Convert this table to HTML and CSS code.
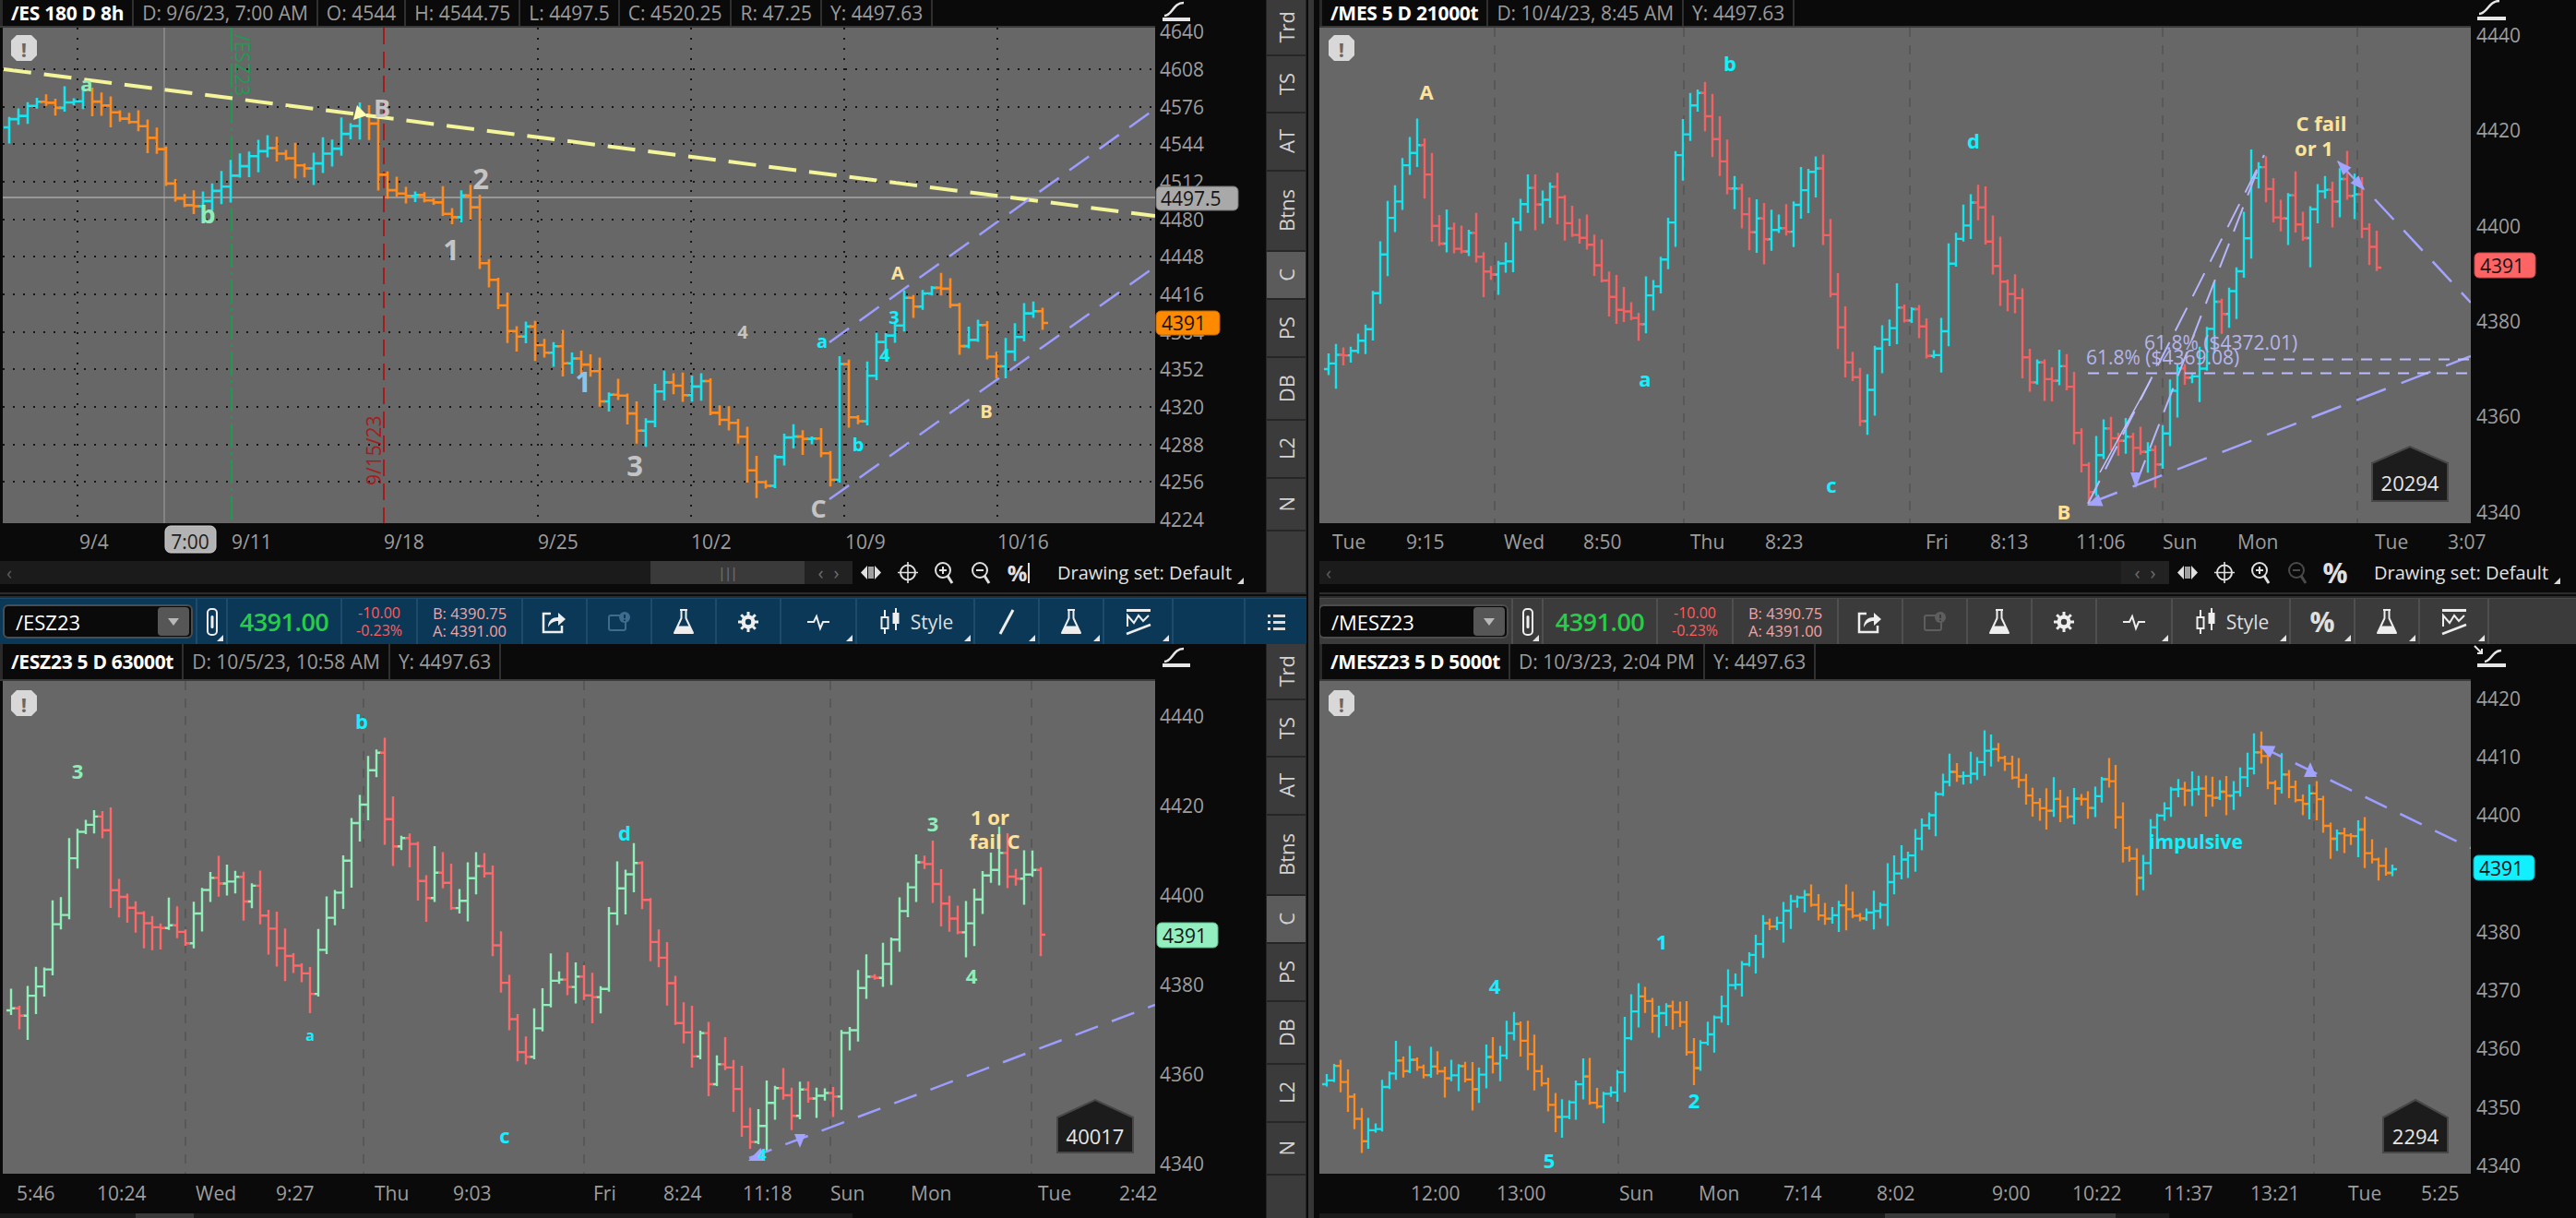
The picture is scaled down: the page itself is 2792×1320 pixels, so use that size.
FILE: index.html
```html
<!DOCTYPE html>
<html lang="en">
<head>
<meta charset="utf-8">
<title>Charts</title>
<link rel="stylesheet" href="styles.css">
</head>
<body>
<div class="app">
  <!-- LEFT COLUMN -->
  <div class="col">
    <div class="pane">
      <section class="panel pl p-top">
        <div class="hdr">
          <span class="cell sym">/ES 180 D 8h</span>
          <span class="cell">D: 9/6/23, 7:00 AM</span>
          <span class="cell">O: 4544</span>
          <span class="cell">H: 4544.75</span>
          <span class="cell">L: 4497.5</span>
          <span class="cell">C: 4520.25</span>
          <span class="cell">R: 47.25</span>
          <span class="cell">Y: 4497.63</span>
        </div>
        <div class="hgap"></div>
        <svg class="axis" width="120" height="606" viewBox="1252 0 120 606">
          <rect x="1252" y="0" width="120" height="606" fill="#0a0a0a"/>
          <path d="M1262 17C1271 17 1271 3 1283 3" fill="none" stroke="#e6e6e6" stroke-width="2.5"/>
          <rect x="1260" y="19" width="30" height="4" fill="#e6e6e6"/>
          <g class="ax">
            <text x="1257" y="34">4640</text><text x="1257" y="75">4608</text><text x="1257" y="116">4576</text>
            <text x="1257" y="156">4544</text><text x="1257" y="197">4512</text><text x="1257" y="238">4480</text>
            <text x="1257" y="278">4448</text><text x="1257" y="319">4416</text><text x="1257" y="360">4384</text>
            <text x="1257" y="400">4352</text><text x="1257" y="441">4320</text><text x="1257" y="482">4288</text>
            <text x="1257" y="522">4256</text><text x="1257" y="563">4224</text>
          </g>
          <rect x="1253" y="202" width="89" height="26" rx="5" fill="#a9a9a9" stroke="#707070"/>
          <text class="bdg" x="1258" y="215">4497.5</text>
          <rect x="1253" y="337" width="69" height="26" rx="5" fill="#ff8a00" stroke="#b86400"/>
          <text class="bdg" x="1259" y="350">4391</text>
        </svg>
        <svg class="chart" width="1252" height="537" viewBox="0 30 1252 537">
          <rect x="3" y="30" width="1249" height="537" fill="#676767"/>
          <g stroke="#151515" stroke-width="2" stroke-dasharray="2 9" fill="none">
            <path d="M3 75H1252M3 116H1252M3 156H1252M3 197H1252M3 238H1252M3 278H1252M3 319H1252M3 360H1252M3 400H1252M3 441H1252M3 482H1252M3 522H1252"/>
            <path d="M84 30V567M583 30V567M749 30V567M915 30V567M1081 30V567"/>
          </g>
          <path d="M178 30V567" stroke="#a2a2a2" stroke-width="1"/>
          <path d="M3 214H1252" stroke="#a8a8a8" stroke-width="1.5"/>
          <path d="M251 30V567" stroke="#1f9a52" stroke-width="2" stroke-dasharray="26 5 3 5"/>
          <text class="vt gn" transform="translate(255 37) rotate(90)">/ESZ23</text>
          <path d="M416 30V567" stroke="#a61c1c" stroke-width="2" stroke-dasharray="18 8"/>
          <text class="vt rd" transform="translate(413 526) rotate(-90)">9/15/23</text>
          <g id="b1"></g>
          <path d="M4 75L1252 234" stroke="#f4f49a" stroke-width="4" stroke-dasharray="30 14" fill="none"/>
          <path d="M899 371L1252 118M899 541L1252 289" stroke="#9d9dff" stroke-width="2.5" stroke-dasharray="26 14" fill="none"/>
          <polygon points="383,130 387,114 398,125" fill="#ffffb4"/>
          <g class="lb">
            <text class="mi" x="94" y="90">a</text>
            <text class="mi big" x="225" y="231">b</text>
            <text class="gr big" x="414" y="116">B</text>
            <text class="gr huge" x="521" y="193">2</text>
            <text class="gr huge" x="489" y="270">1</text>
            <text class="bl huge" x="632" y="413">1</text>
            <text class="gr huge" x="688" y="504">3</text>
            <text class="gr sm" x="805" y="359">4</text>
            <text class="gr big" x="887" y="550">C</text>
            <text class="cy sm" x="891" y="369">a</text>
            <text class="cy sm" x="930" y="481">b</text>
            <text class="cy sm" x="969" y="343">3</text>
            <text class="cy sm" x="959" y="384">4</text>
            <text class="ye sm" x="973" y="295">A</text>
            <text class="ye sm" x="1069" y="445">B</text>
          </g>
          <g transform="translate(26 52)">
            <polygon points="-8,-14 8,-14 14,-8 14,8 8,14 -8,14 -14,8 -14,-8" fill="#d8d8d8"/>
            <text class="bang" x="0" y="1">!</text>
          </g>
        </svg>
        <svg class="times" width="1252" height="39" viewBox="0 567 1252 39">
          <g class="tl">
            <text x="86" y="595">9/4</text><text x="251" y="595">9/11</text><text x="416" y="595">9/18</text>
            <text x="583" y="595">9/25</text><text x="749" y="595">10/2</text><text x="916" y="595">10/9</text>
            <text x="1081" y="595">10/16</text>
          </g>
          <rect x="179" y="570" width="55" height="29" rx="6" fill="#b3b3b3" stroke="#d0d0d0"/>
          <text class="tlb" x="206" y="595">7:00</text>
        </svg>
        <div class="tools">
          <div class="scroll sc-l">
            <span class="arr">‹</span>
            <span class="fill"></span>
            <span class="thumb"><span class="grip">|||</span></span>
            <span class="arrs">‹ ›</span>
          </div>
          <svg class="ti" width="40" height="25" viewBox="0 0 40 25"><path d="M9 12.5L16 5V20ZM31 12.5L24 5V20Z" fill="#e0e0e0"/><path d="M18 6V19M20 6V19M22 6V19" stroke="#e0e0e0" stroke-width="1.4"/></svg>
          <svg class="ti" width="40" height="25" viewBox="0 0 40 25"><circle cx="20" cy="12.5" r="8" fill="none" stroke="#e0e0e0" stroke-width="2"/><path d="M20 1V24M9 12.5H31" stroke="#e0e0e0" stroke-width="1.6"/></svg>
          <svg class="ti" width="40" height="25" viewBox="0 0 40 25"><circle cx="18" cy="10" r="8" fill="none" stroke="#e0e0e0" stroke-width="2"/><path d="M14 10H22M18 6V14" stroke="#e0e0e0" stroke-width="2"/><path d="M23 16L28 24" stroke="#e0e0e0" stroke-width="3"/></svg>
          <svg class="ti" width="40" height="25" viewBox="0 0 40 25"><circle cx="18" cy="10" r="8" fill="none" stroke="#e0e0e0" stroke-width="2"/><path d="M14 10H22" stroke="#e0e0e0" stroke-width="2"/><path d="M23 16L28 24" stroke="#e0e0e0" stroke-width="3"/></svg>
          <span class="pct">%<span class="pbar"></span></span>
          <span class="dset">Drawing set: Default</span>
          <span class="corner"></span>
        </div>
      </section>
      <nav class="side">
        <div class="tab t1"><span>Trd</span></div>
        <div class="tab t2"><span>TS</span></div>
        <div class="tab t3"><span>AT</span></div>
        <div class="tab t4"><span>Btns</span></div>
        <div class="tab t5 on"><span>C</span></div>
        <div class="tab t6"><span>PS</span></div>
        <div class="tab t7"><span>DB</span></div>
        <div class="tab t8"><span>L2</span></div>
        <div class="tab t9"><span>N</span></div>
        <div class="tab tx"></div>
      </nav>
    </div>
    <div class="sep"></div>
    <div class="toolbar tb-blue">
      <div class="tc c-sym"><div class="symbox"><span>/ESZ23</span><span class="ddb"><svg width="14" height="10" viewBox="0 0 14 10"><path d="M1 1H13L7 9Z" fill="#b8b8b8"/></svg></span></div></div>
      <div class="tc c-link dd"><svg width="16" height="34" viewBox="0 0 16 34"><rect x="3" y="3" width="10" height="28" rx="4" fill="none" stroke="#eee" stroke-width="2"/><rect x="6.5" y="10" width="3" height="14" rx="1.5" fill="#eee"/></svg></div>
      <div class="tc c-price"><span class="last">4391.00</span></div>
      <div class="tc c-chg"><span>-10.00</span><span>-0.23%</span></div>
      <div class="tc c-ba"><span>B: 4390.75</span><span>A: 4391.00</span></div>
      <div class="tc c-ico"><svg width="32" height="30" viewBox="0 0 32 30"><path d="M12 6H4V26H24V19" fill="none" stroke="#eee" stroke-width="2.5"/><path d="M9 21C9 13 14 10 20 10V5L28 12L20 19V14C15 14 12 16 9 21Z" fill="#eee"/></svg></div>
      <div class="tc c-ico"><svg width="30" height="30" viewBox="0 0 30 30"><rect x="4" y="8" width="18" height="16" rx="2" fill="none" stroke="#3f6b8c" stroke-width="2"/><circle cx="21" cy="10" r="6" fill="#3f6b8c"/><path d="M21 7V11M21 12.5V14" stroke="#0b3856" stroke-width="2"/></svg></div>
      <div class="tc c-ico"><svg width="30" height="32" viewBox="0 0 30 32"><path d="M11 3H19M12.5 3V12L5 28H25L17.5 12V3" fill="none" stroke="#eee" stroke-width="2" stroke-linejoin="round"/><path d="M8.6 20.5H21.4L25 28H5Z" fill="#eee"/></svg></div>
      <div class="tc c-ico"><svg width="30" height="30" viewBox="0 0 30 30"><g fill="#eee"><circle cx="15" cy="15" r="7.5"/><path d="M13.5 4H16.5V9H13.5ZM13.5 21H16.5V26H13.5ZM4 13.5H9V16.5H4ZM21 13.5H26V16.5H21Z"/><path d="M13.5 4H16.5V9H13.5ZM13.5 21H16.5V26H13.5ZM4 13.5H9V16.5H4ZM21 13.5H26V16.5H21Z" transform="rotate(45 15 15)"/></g><circle cx="15" cy="15" r="3.2" fill="#0b3856"/></svg></div>
      <div class="tc c-pulse dd"><svg width="30" height="30" viewBox="0 0 30 30"><path d="M3 15H10L13 9L17 22L20 15H27" fill="none" stroke="#eee" stroke-width="2"/></svg></div>
      <div class="tc c-style dd"><svg width="28" height="34" viewBox="0 0 28 34"><path d="M8 4V30M20 2V26" stroke="#eee" stroke-width="2"/><rect x="4.5" y="12" width="7" height="12" fill="#0b3856" stroke="#eee" stroke-width="2"/><rect x="16.5" y="7" width="7" height="12" fill="#eee"/></svg><span class="stl">Style</span></div>
      <div class="tc c-ico dd"><svg width="30" height="32" viewBox="0 0 30 32"><path d="M8 29L22 3" stroke="#eee" stroke-width="3"/></svg></div>
      <div class="tc c-ico dd"><svg width="30" height="32" viewBox="0 0 30 32"><path d="M11 3H19M12.5 3V12L5 28H25L17.5 12V3" fill="none" stroke="#eee" stroke-width="2" stroke-linejoin="round"/><path d="M8.6 20.5H21.4L25 28H5Z" fill="#eee"/></svg></div>
      <div class="tc c-zig dd"><svg width="34" height="34" viewBox="0 0 34 34"><rect x="4" y="3" width="26" height="3" fill="#eee"/><path d="M5 22V10L12 18L17 10L22 16L28 10" fill="none" stroke="#eee" stroke-width="2"/><path d="M4 30L30 20" stroke="#eee" stroke-width="2.5"/></svg></div>
      <div class="tc c-fill"></div>
      <div class="tc c-menu"><svg width="30" height="30" viewBox="0 0 30 30"><g fill="#dcdcdc"><rect x="6" y="7" width="3" height="3"/><rect x="12" y="7" width="13" height="3"/><rect x="6" y="14" width="3" height="3"/><rect x="12" y="14" width="13" height="3"/><rect x="6" y="21" width="3" height="3"/><rect x="12" y="21" width="13" height="3"/></g></svg></div>
    </div>
    <div class="pane">
      <section class="panel pl p-bot">
        <div class="hdr">
          <span class="cell sym">/ESZ23 5 D 63000t</span>
          <span class="cell">D: 10/5/23, 10:58 AM</span>
          <span class="cell">Y: 4497.63</span>
        </div>
        <div class="hgap"></div>
        <svg class="axis" width="120" height="614" viewBox="1252 698 120 614">
          <rect x="1252" y="698" width="120" height="614" fill="#0a0a0a"/>
          <path d="M1262 717C1271 717 1271 703 1283 703" fill="none" stroke="#e6e6e6" stroke-width="2.5"/>
          <rect x="1260" y="719" width="30" height="4" fill="#e6e6e6"/>
          <g class="ax">
            <text x="1257" y="776">4440</text><text x="1257" y="873">4420</text><text x="1257" y="970">4400</text>
            <text x="1257" y="1067">4380</text><text x="1257" y="1164">4360</text><text x="1257" y="1261">4340</text>
          </g>
          <rect x="1254" y="1000" width="66" height="27" rx="5" fill="#93efbf" stroke="#5fb88c"/>
          <text class="bdg" x="1260" y="1014">4391</text>
        </svg>
        <svg class="chart" width="1252" height="534" viewBox="0 738 1252 534">
          <rect x="3" y="738" width="1249" height="534" fill="#676767"/>
          <path d="M201 738V1272M394 738V1272M633 738V1272M900 738V1272M1118 738V1272" stroke="#585858" stroke-width="2" stroke-dasharray="10 9" fill="none"/>
          <g id="b3"></g>
          <path d="M812 1255L1252 1089" stroke="#9d9dff" stroke-width="2.5" stroke-dasharray="26 16" fill="none"/>
          <polygon points="811,1258 829.5,1258 824.5,1244" fill="#a2a2ff"/>
          <polygon points="861,1229 873,1229 867,1244" fill="#a2a2ff"/>
          <g class="lb">
            <text class="mi" x="84" y="835">3</text>
            <text class="cy" x="392" y="781">b</text>
            <text class="cy xs" x="336" y="1122">a</text>
            <text class="cy" x="547" y="1230">c</text>
            <text class="cy" x="677" y="902">d</text>
            <text class="cy xs" x="826" y="1251">4</text>
            <text class="mi" x="1011" y="892">3</text>
            <text class="mi" x="1053" y="1057">4</text>
            <text class="ye" x="1073" y="885">1 or</text>
            <text class="ye" x="1078" y="911">fail C</text>
          </g>
          <polygon points="1146,1211 1187,1192 1228,1211 1228,1249 1146,1249" fill="#1c1c1c" stroke="#474747" stroke-width="2"/>
          <text class="pent" x="1187" y="1231">40017</text>
          <g transform="translate(26 762)">
            <polygon points="-8,-14 8,-14 14,-8 14,8 8,14 -8,14 -14,8 -14,-8" fill="#d8d8d8"/>
            <text class="bang" x="0" y="1">!</text>
          </g>
        </svg>
        <svg class="times" width="1252" height="40" viewBox="0 1272 1252 40">
          <g class="tl">
            <text x="18" y="1301">5:46</text><text x="105" y="1301">10:24</text><text x="212" y="1301">Wed</text>
            <text x="299" y="1301">9:27</text><text x="406" y="1301">Thu</text><text x="491" y="1301">9:03</text>
            <text x="643" y="1301">Fri</text><text x="719" y="1301">8:24</text><text x="805" y="1301">11:18</text>
            <text x="900" y="1301">Sun</text><text x="987" y="1301">Mon</text><text x="1125" y="1301">Tue</text>
            <text x="1213" y="1301">2:42</text>
          </g>
        </svg>
        <div class="tools tools-b">
          <div class="scroll sc-l"><span class="bspc1"></span><span class="bthumb bt1"></span></div>
        </div>
      </section>
      <nav class="side">
        <div class="tab t1"><span>Trd</span></div>
        <div class="tab t2"><span>TS</span></div>
        <div class="tab t3"><span>AT</span></div>
        <div class="tab t4"><span>Btns</span></div>
        <div class="tab t5 on"><span>C</span></div>
        <div class="tab t6"><span>PS</span></div>
        <div class="tab t7"><span>DB</span></div>
        <div class="tab t8"><span>L2</span></div>
        <div class="tab t9"><span>N</span></div>
        <div class="tab tx"></div>
      </nav>
    </div>
  </div>

  <div class="divider"><div class="dline"></div></div>

  <!-- RIGHT COLUMN -->
  <div class="col">
    <div class="pane">
      <section class="panel pr p-top">
        <div class="hdr">
          <span class="cell sym">/MES 5 D 21000t</span>
          <span class="cell">D: 10/4/23, 8:45 AM</span>
          <span class="cell">Y: 4497.63</span>
        </div>
        <div class="hgap"></div>
        <svg class="axis" width="114" height="606" viewBox="2678 0 114 606">
          <rect x="2678" y="0" width="114" height="606" fill="#0a0a0a"/>
          <path d="M2687 15C2696 15 2697 1 2709 1" fill="none" stroke="#e6e6e6" stroke-width="2.5"/>
          <rect x="2685" y="18" width="31" height="4" fill="#e6e6e6"/>
          <g class="ax">
            <text x="2684" y="38">4440</text><text x="2684" y="141">4420</text><text x="2684" y="245">4400</text>
            <text x="2684" y="348">4380</text><text x="2684" y="451">4360</text><text x="2684" y="555">4340</text>
          </g>
          <rect x="2682" y="274" width="66" height="27" rx="5" fill="#ff6464" stroke="#c04848"/>
          <text class="bdg" x="2688" y="288">4391</text>
        </svg>
        <svg class="chart" width="1248" height="537" viewBox="1430 30 1248 537">
          <rect x="1430" y="30" width="1248" height="537" fill="#676767"/>
          <path d="M1620 30V567M1825 30V567M2070 30V567M2344 30V567M2555 30V567" stroke="#585858" stroke-width="2" stroke-dasharray="10 9" fill="none"/>
          <g id="b2"></g>
          <g fill="none" stroke="#a4a4ff">
            <path d="M2263 546L2678 386" stroke-width="2.5" stroke-dasharray="34 18"/>
            <path d="M2263 546L2454 168" stroke-width="2" stroke-dasharray="28 14" stroke="#b6b6ff"/>
            <path d="M2315 525L2450 176" stroke-width="2" stroke-dasharray="28 14" stroke="#b6b6ff"/>
            <path d="M2276 512L2331 412" stroke-width="1.5" stroke="#c4c4ff"/>
            <path d="M2534 175L2562 205" stroke-width="2"/>
            <path d="M2574 216L2678 328" stroke-width="2.5" stroke-dasharray="30 16"/>
            <path d="M2454 389.5H2678M2263 404.6H2678" stroke-width="2" stroke-dasharray="12 9" stroke="#bcbcff"/>
          </g>
          <polygon points="2262,548 2279.5,548.5 2274.5,535.5" fill="#a2a2ff"/>
          <polygon points="2309,512 2321,512 2315,529" fill="#a2a2ff"/>
          <polygon points="2533,174 2548.4,181.6 2539.6,189.8" fill="#a2a2ff"/>
          <polygon points="2563,206 2556.4,190.2 2547.6,198.4" fill="#a2a2ff"/>
          <text class="fib" x="2324" y="379">61.8% ($4372.01)</text>
          <text class="fib" x="2261" y="395">61.8% ($4369.08)</text>
          <g class="lb">
            <text class="ye" x="1546" y="99">A</text>
            <text class="cy" x="1875" y="68">b</text>
            <text class="cy" x="1783" y="410">a</text>
            <text class="cy" x="1985" y="525">c</text>
            <text class="cy" x="2139" y="152">d</text>
            <text class="ye" x="2237" y="554">B</text>
            <text class="ye" x="2516" y="133">C fail</text>
            <text class="ye" x="2508" y="160">or 1</text>
          </g>
          <polygon points="2571,502 2612,484 2653,502 2653,543 2571,543" fill="#1c1c1c" stroke="#474747" stroke-width="2"/>
          <text class="pent" x="2612" y="523">20294</text>
          <g transform="translate(1454 52)">
            <polygon points="-8,-14 8,-14 14,-8 14,8 8,14 -8,14 -14,8 -14,-8" fill="#d8d8d8"/>
            <text class="bang" x="0" y="1">!</text>
          </g>
        </svg>
        <svg class="times" width="1248" height="39" viewBox="1430 567 1248 39">
          <g class="tl">
            <text x="1444" y="595">Tue</text><text x="1524" y="595">9:15</text><text x="1630" y="595">Wed</text>
            <text x="1716" y="595">8:50</text><text x="1832" y="595">Thu</text><text x="1913" y="595">8:23</text>
            <text x="2087" y="595">Fri</text><text x="2157" y="595">8:13</text><text x="2250" y="595">11:06</text>
            <text x="2344" y="595">Sun</text><text x="2425" y="595">Mon</text><text x="2574" y="595">Tue</text>
            <text x="2653" y="595">3:07</text>
          </g>
        </svg>
        <div class="tools">
          <div class="scroll sc-r">
            <span class="arr">‹</span>
            <span class="fill"></span>
            <span class="arrs">‹ ›</span>
          </div>
          <svg class="ti" width="40" height="25" viewBox="0 0 40 25"><path d="M9 12.5L16 5V20ZM31 12.5L24 5V20Z" fill="#e0e0e0"/><path d="M18 6V19M20 6V19M22 6V19" stroke="#e0e0e0" stroke-width="1.4"/></svg>
          <svg class="ti" width="40" height="25" viewBox="0 0 40 25"><circle cx="20" cy="12.5" r="8" fill="none" stroke="#e0e0e0" stroke-width="2"/><path d="M20 1V24M9 12.5H31" stroke="#e0e0e0" stroke-width="1.6"/></svg>
          <svg class="ti" width="40" height="25" viewBox="0 0 40 25"><circle cx="18" cy="10" r="8" fill="none" stroke="#e0e0e0" stroke-width="2"/><path d="M14 10H22M18 6V14" stroke="#e0e0e0" stroke-width="2"/><path d="M23 16L28 24" stroke="#e0e0e0" stroke-width="3"/></svg>
          <svg class="ti" width="40" height="25" viewBox="0 0 40 25"><circle cx="18" cy="10" r="8" fill="none" stroke="#4a4a4a" stroke-width="2"/><path d="M14 10H22" stroke="#4a4a4a" stroke-width="2"/><path d="M23 16L28 24" stroke="#4a4a4a" stroke-width="3"/></svg>
          <span class="pct big">%</span>
          <span class="dset">Drawing set: Default</span>
          <span class="corner"></span>
        </div>
      </section>
    </div>
    <div class="sep"></div>
    <div class="toolbar tb-gray">
      <div class="tc c-sym"><div class="symbox"><span>/MESZ23</span><span class="ddb"><svg width="14" height="10" viewBox="0 0 14 10"><path d="M1 1H13L7 9Z" fill="#b8b8b8"/></svg></span></div></div>
      <div class="tc c-link dd"><svg width="16" height="34" viewBox="0 0 16 34"><rect x="3" y="3" width="10" height="28" rx="4" fill="none" stroke="#eee" stroke-width="2"/><rect x="6.5" y="10" width="3" height="14" rx="1.5" fill="#eee"/></svg></div>
      <div class="tc c-price"><span class="last">4391.00</span></div>
      <div class="tc c-chg"><span>-10.00</span><span>-0.23%</span></div>
      <div class="tc c-ba"><span>B: 4390.75</span><span>A: 4391.00</span></div>
      <div class="tc c-ico"><svg width="32" height="30" viewBox="0 0 32 30"><path d="M12 6H4V26H24V19" fill="none" stroke="#eee" stroke-width="2.5"/><path d="M9 21C9 13 14 10 20 10V5L28 12L20 19V14C15 14 12 16 9 21Z" fill="#eee"/></svg></div>
      <div class="tc c-ico"><svg width="30" height="30" viewBox="0 0 30 30"><rect x="4" y="8" width="18" height="16" rx="2" fill="none" stroke="#5e5e5e" stroke-width="2"/><circle cx="21" cy="10" r="6" fill="#5e5e5e"/><path d="M21 7V11M21 12.5V14" stroke="#3b3b3b" stroke-width="2"/></svg></div>
      <div class="tc c-ico"><svg width="30" height="32" viewBox="0 0 30 32"><path d="M11 3H19M12.5 3V12L5 28H25L17.5 12V3" fill="none" stroke="#eee" stroke-width="2" stroke-linejoin="round"/><path d="M8.6 20.5H21.4L25 28H5Z" fill="#eee"/></svg></div>
      <div class="tc c-ico"><svg width="30" height="30" viewBox="0 0 30 30"><g fill="#eee"><circle cx="15" cy="15" r="7.5"/><path d="M13.5 4H16.5V9H13.5ZM13.5 21H16.5V26H13.5ZM4 13.5H9V16.5H4ZM21 13.5H26V16.5H21Z"/><path d="M13.5 4H16.5V9H13.5ZM13.5 21H16.5V26H13.5ZM4 13.5H9V16.5H4ZM21 13.5H26V16.5H21Z" transform="rotate(45 15 15)"/></g><circle cx="15" cy="15" r="3.2" fill="#3b3b3b"/></svg></div>
      <div class="tc c-pulse dd"><svg width="30" height="30" viewBox="0 0 30 30"><path d="M3 15H10L13 9L17 22L20 15H27" fill="none" stroke="#eee" stroke-width="2"/></svg></div>
      <div class="tc c-style dd"><svg width="28" height="34" viewBox="0 0 28 34"><path d="M8 4V30M20 2V26" stroke="#eee" stroke-width="2"/><rect x="4.5" y="12" width="7" height="12" fill="#3b3b3b" stroke="#eee" stroke-width="2"/><rect x="16.5" y="7" width="7" height="12" fill="#eee"/></svg><span class="stl">Style</span></div>
      <div class="tc c-ico dd"><span class="pct big">%</span></div>
      <div class="tc c-ico dd"><svg width="30" height="32" viewBox="0 0 30 32"><path d="M11 3H19M12.5 3V12L5 28H25L17.5 12V3" fill="none" stroke="#eee" stroke-width="2" stroke-linejoin="round"/><path d="M8.6 20.5H21.4L25 28H5Z" fill="#eee"/></svg></div>
      <div class="tc c-zig dd"><svg width="34" height="34" viewBox="0 0 34 34"><rect x="4" y="3" width="26" height="3" fill="#eee"/><path d="M5 22V10L12 18L17 10L22 16L28 10" fill="none" stroke="#eee" stroke-width="2"/><path d="M4 30L30 20" stroke="#eee" stroke-width="2.5"/></svg></div>
      <div class="tc c-fill"></div>
    </div>
    <div class="pane">
      <section class="panel pr p-bot">
        <div class="hdr">
          <span class="cell sym">/MESZ23 5 D 5000t</span>
          <span class="cell">D: 10/3/23, 2:04 PM</span>
          <span class="cell">Y: 4497.63</span>
        </div>
        <div class="hgap"></div>
        <svg class="axis" width="114" height="614" viewBox="2678 698 114 614">
          <rect x="2678" y="698" width="114" height="614" fill="#0a0a0a"/>
          <path d="M2682 700L2690 708M2690 703V708H2685" fill="none" stroke="#e6e6e6" stroke-width="2"/>
          <path d="M2693 717C2700 717 2701 705 2711 705" fill="none" stroke="#e6e6e6" stroke-width="2.5"/>
          <rect x="2685" y="719" width="31" height="4" fill="#e6e6e6"/>
          <g class="ax">
            <text x="2684" y="757">4420</text><text x="2684" y="820">4410</text><text x="2684" y="883">4400</text>
            <text x="2684" y="1010">4380</text><text x="2684" y="1073">4370</text>
            <text x="2684" y="1136">4360</text><text x="2684" y="1200">4350</text><text x="2684" y="1263">4340</text>
          </g>
          <rect x="2681" y="927" width="66" height="27" rx="5" fill="#10f0ff" stroke="#0aa8b4"/>
          <text class="bdg" x="2687" y="941">4391</text>
        </svg>
        <svg class="chart" width="1248" height="534" viewBox="1430 738 1248 534">
          <rect x="1430" y="738" width="1248" height="534" fill="#676767"/>
          <path d="M1754 738V1272M2508 738V1272" stroke="#585858" stroke-width="2" stroke-dasharray="10 9" fill="none"/>
          <g id="b4"></g>
          <path d="M2450 809L2678 919" stroke="#9d9dff" stroke-width="2.5" stroke-dasharray="26 16" fill="none"/>
          <polygon points="2449,808 2466.4,808.6 2460.4,821.2" fill="#a2a2ff"/>
          <polygon points="2504,826 2497,842 2511,842" fill="#a2a2ff"/>
          <g class="lb">
            <text class="cy" x="1620" y="1068">4</text>
            <text class="cy" x="1801" y="1020">1</text>
            <text class="cy" x="1836" y="1192">2</text>
            <text class="cy" x="1679" y="1257">5</text>
            <text class="cy imp" x="2380" y="912">impulsive</text>
          </g>
          <polygon points="2583,1211 2618,1192 2653,1211 2653,1249 2583,1249" fill="#1c1c1c" stroke="#474747" stroke-width="2"/>
          <text class="pent" x="2618" y="1231">2294</text>
          <g transform="translate(1454 762)">
            <polygon points="-8,-14 8,-14 14,-8 14,8 8,14 -8,14 -14,8 -14,-8" fill="#d8d8d8"/>
            <text class="bang" x="0" y="1">!</text>
          </g>
        </svg>
        <svg class="times" width="1248" height="40" viewBox="1430 1272 1248 40">
          <g class="tl">
            <text x="1529" y="1301">12:00</text><text x="1622" y="1301">13:00</text><text x="1755" y="1301">Sun</text>
            <text x="1841" y="1301">Mon</text><text x="1933" y="1301">7:14</text><text x="2034" y="1301">8:02</text>
            <text x="2159" y="1301">9:00</text><text x="2246" y="1301">10:22</text><text x="2345" y="1301">11:37</text>
            <text x="2439" y="1301">13:21</text><text x="2545" y="1301">Tue</text><text x="2624" y="1301">5:25</text>
          </g>
        </svg>
        <div class="tools tools-b">
          <div class="scroll sc-r"><span class="bspc2"></span><span class="bthumb bt2"></span></div>
        </div>
      </section>
    </div>
  </div>
</div>
<script src="script.js"></script>
</body>
</html>
```

FILE: styles.css
```css
* { box-sizing: border-box; }
html, body { margin: 0; padding: 0; }
body {
  width: 2792px; height: 1320px; overflow: hidden;
  background: #0a0a0a;
  font-family: "Open Sans", "Liberation Sans", sans-serif;
  color: #9c9c9c;
}
.app { display: grid; grid-template-columns: 1416px 14px 1362px; height: 1320px; }
.col { display: grid; grid-template-rows: 642px 6px 50px 622px; min-width: 0; overflow: hidden; }
.pane { display: flex; overflow: hidden; }
.divider { background: #0a0a0a; padding-left: 2px; }
.dline { width: 6px; height: 100%; background: #363636; }
.sep { background: #0d0d0d; border-top: 2px solid #2c2c2c; border-bottom: 2px solid #2c2c2c; }

/* panels */
.panel { display: grid; background: #0a0a0a; overflow: hidden; }
.pl { grid-template-columns: 1252px 120px; width: 1372px; }
.pr { grid-template-columns: 1248px 114px; width: 1362px; }
.p-top { grid-template-rows: 28px 2px 537px 39px 36px; }
.p-bot { grid-template-rows: 38px 2px 534px 40px 8px; }
.hdr { grid-row: 1; grid-column: 1; display: flex; background: #0a0a0a; border-left: 3px solid #2a2a2a; overflow: hidden; }
.hgap { grid-row: 2; grid-column: 1; background: #3a3a3a; }
.axis { grid-row: 1 / 5; grid-column: 2; display: block; }
.chart { grid-row: 3; grid-column: 1; display: block; }
.times { grid-row: 4; grid-column: 1; display: block; overflow: visible; }
.tools { grid-row: 5; grid-column: 1 / 3; display: flex; align-items: center; height: 25px; margin-top: 2px; }
.tools-b { height: 8px; margin-top: 3px; align-items: stretch; }

.cell {
  display: flex; align-items: center; padding: 0 9px;
  border-right: 2px solid #303030;
  font-size: 21px; white-space: nowrap; color: #9a9a9a;
}
.cell.sym { color: #ffffff; font-weight: 700; letter-spacing: -0.3px; }

/* svg text */
.ax { font-size: 21px; fill: #9d9d9d; dominant-baseline: central; }
.bdg { font-size: 21px; fill: #141414; dominant-baseline: central; }
.tl { font-size: 21px; fill: #9d9d9d; }
.tlb { font-size: 21px; fill: #1e1e1e; text-anchor: middle; }
.vt { font-size: 21px; }
.gn { fill: #1f9a52; }
.rd { fill: #a61c1c; }
.lb { font-weight: 700; font-size: 22px; text-anchor: middle; dominant-baseline: central; }
.lb .sm { font-size: 20px; }
.lb .xs { font-size: 16px; }
.lb .big { font-size: 27px; }
.lb .huge { font-size: 31px; }
.cy { fill: #12f1ff; }
.ye { fill: #ffe29a; }
.mi { fill: #8eedbb; }
.gr { fill: #c4c4c4; }
.bl { fill: #86c6ee; }
.imp { font-size: 21px; }
.fib { font-size: 21px; fill: #b6b6ea; }
.pent { font-size: 22px; fill: #e6e6e6; text-anchor: middle; dominant-baseline: central; }
.bang { font-size: 22px; font-weight: 700; fill: #676767; text-anchor: middle; dominant-baseline: central; }

/* tools row */
.scroll { height: 25px; background: #1b1b1b; display: flex; align-items: center; flex: none; }
.sc-l { width: 924px; }
.sc-r { width: 921px; }
.tools-b .scroll { height: 8px; align-items: stretch; }
.arr { width: 20px; text-align: center; color: #5e5e5e; font-size: 20px; line-height: 25px; }
.fill { flex: 1; }
.thumb { width: 167px; height: 25px; background: #3a3a3a; display: flex; align-items: center; justify-content: center; }
.grip { color: #7a7a7a; font-size: 14px; letter-spacing: -1px; }
.arrs { width: 52px; height: 25px; background: #222; color: #6e6e6e; font-size: 20px; line-height: 25px; text-align: center; word-spacing: 6px; }
.ti { display: block; flex: none; }
.pct { width: 40px; text-align: center; color: #e0e0e0; font-size: 24px; font-weight: 700; line-height: 25px; display: flex; justify-content: center; align-items: center; }
.pct.big { font-size: 30px; }
.pbar { width: 2px; height: 22px; background: #e0e0e0; margin-left: 1px; }
.dset { margin-left: 22px; color: #e2e2e2; font-size: 20px; white-space: nowrap; line-height: 25px; }
.corner { width: 0; height: 0; border-left: 7px solid transparent; border-bottom: 7px solid #d8d8d8; align-self: flex-end; margin-left: 6px; }
.bspc1 { width: 147px; }
.bspc2 { width: 613px; }
.bthumb { background: #3a3a3a; height: 8px; }
.bt1 { width: 63px; }
.bt2 { width: 250px; }

/* sidebar */
.side { width: 44px; flex: none; display: flex; flex-direction: column; gap: 2px; padding: 0 1px; background: #262626; }
.tab { background: #3b3b3b; display: flex; align-items: center; justify-content: center; color: #d2d2d2; font-size: 22px; flex: none; }
.tab span { writing-mode: vertical-rl; transform: rotate(180deg); }
.tab.on { background: #5b5b5b; }
.t1 { height: 59px; } .t2 { height: 60px; } .t3 { height: 61px; } .t4 { height: 85px; }
.t5 { height: 50px; } .t6 { height: 61px; } .t7 { height: 66px; } .t8 { height: 61px; }
.t9 { height: 55px; } .tx { flex: 1; }

/* toolbars */
.toolbar { display: flex; align-items: stretch; height: 50px; overflow: hidden; }
.tb-blue { background: #0b3856; border-top: 1px solid #1a4a6c; }
.tb-gray { background: #3b3b3b; border-top: 1px solid #4a4a4a; margin-left: -4px; }
.tc { display: flex; align-items: center; justify-content: center; position: relative; flex: none; }
.tb-blue .tc { border-right: 2px solid #1d4b6b; }
.tb-gray .tc { border-right: 2px solid #4f4f4f; }
.tb-blue .c-fill, .tb-gray .c-fill { flex: 1; border-right: none; }
.c-sym { width: 214px; }
.c-link { width: 33px; }
.c-price { width: 124px; }
.c-chg { width: 82px; flex-direction: column; color: #ff5e5e; font-size: 16px; line-height: 19px; }
.c-ba { width: 114px; flex-direction: column; color: #f2a4a4; font-size: 16.5px; line-height: 19px; }
.c-ico { width: 70px; }
.c-pulse { width: 82px; }
.c-style { width: 128px; gap: 8px; }
.c-zig { width: 75px; }
.c-menu { width: 68px; border-left: 2px solid #1d4b6b; }
.tb-blue .c-menu { border-right: none; }
.symbox {
  width: 206px; height: 37px; background: #0a0a0a; border: 2px solid #4d4d4d; border-radius: 6px;
  display: flex; align-items: center; justify-content: space-between; padding-left: 12px; padding-right: 2px;
  color: #ffffff; font-size: 22px;
}
.ddb { width: 34px; height: 31px; background: #565656; border-radius: 4px; display: flex; align-items: center; justify-content: center; }
.last { color: #27cc48; font-size: 27px; font-weight: 600; letter-spacing: -0.5px; }
.stl { color: #dedede; font-size: 21px; }
.dd::after {
  content: ""; position: absolute; right: 3px; bottom: 3px; width: 0; height: 0;
  border-left: 7px solid transparent; border-bottom: 7px solid #e4e4e4;
}
```

FILE: script.js
```js
(function () {
  var NS = "http://www.w3.org/2000/svg";
  function rng(a) {
    return function () {
      a |= 0; a = a + 0x6D2B79F5 | 0;
      var t = Math.imul(a ^ a >>> 15, 1 | a);
      t = t + Math.imul(t ^ t >>> 7, 61 | t) ^ t;
      return ((t ^ t >>> 14) >>> 0) / 4294967296;
    };
  }
  function pairs(f) { var o = []; for (var i = 0; i < f.length; i += 2) o.push([f[i], f[i + 1]]); return o; }
  function interp(p, x) {
    for (var i = 0; i < p.length - 1; i++) {
      if (x <= p[i + 1][0]) { var a = p[i], b = p[i + 1]; return a[1] + (b[1] - a[1]) * (x - a[0]) / (b[0] - a[0]); }
    }
    return p[p.length - 1][1];
  }
  var charts = [
    { id: "b1", seed: 7, dx: 10, noise: 8, wick: 16, tick: 6, sw: 2.6, up: "#18e4ee", dn: "#ff8a1e",
      path: [10,133,30,115,45,105,60,118,75,110,90,100,105,112,120,118,135,130,150,140,160,150,170,160,180,200,190,212,205,226,215,218,230,210,241,198,255,185,273,166,290,160,305,168,322,185,338,178,354,165,370,148,385,130,395,124,405,140,412,208,425,205,440,212,455,215,470,222,482,230,492,240,500,210,508,200,515,278,527,295,539,326,555,370,571,355,587,384,600,375,611,395,625,385,640,405,652,440,667,420,680,450,695,470,707,430,722,410,735,420,745,440,756,400,772,450,784,460,796,450,804,490,815,520,828,530,836,505,848,470,860,475,872,480,884,478,896,500,903,535,910,395,920,450,933,455,945,370,957,365,965,370,977,325,990,330,1003,318,1013,305,1021,310,1030,330,1040,375,1052,365,1061,350,1069,380,1077,405,1089,380,1101,362,1113,330,1126,345,1134,350] },
    { id: "b2", seed: 21, dx: 8, noise: 16, wick: 30, tick: 5, sw: 2.4, up: "#18e4ee", dn: "#f26262",
      path: [1440,395,1454,380,1466,375,1478,360,1486,320,1494,290,1502,250,1510,220,1518,188,1530,165,1540,155,1550,230,1560,270,1570,250,1580,275,1592,260,1604,285,1616,290,1628,295,1641,240,1653,200,1663,230,1675,215,1685,195,1695,240,1705,265,1715,250,1725,280,1735,300,1745,320,1755,340,1765,330,1775,360,1783,330,1793,300,1805,270,1812,200,1820,150,1830,120,1838,100,1846,110,1852,150,1862,170,1872,200,1884,210,1894,250,1904,240,1914,270,1924,230,1934,255,1944,215,1956,200,1964,170,1972,200,1980,300,1990,345,2000,390,2010,420,2018,470,2026,400,2036,370,2046,360,2056,340,2066,350,2076,330,2084,380,2094,400,2103,360,2111,290,2120,260,2127,240,2135,220,2143,215,2150,260,2159,285,2168,300,2178,320,2188,330,2195,425,2203,410,2211,395,2219,420,2231,400,2243,430,2251,480,2259,520,2265,545,2275,470,2285,465,2295,480,2305,470,2315,500,2325,490,2335,505,2345,470,2353,420,2363,400,2371,410,2380,415,2390,360,2398,325,2406,340,2414,330,2422,300,2430,270,2438,200,2446,185,2454,190,2462,230,2470,250,2478,200,2486,240,2494,260,2502,225,2510,220,2518,200,2526,220,2534,195,2542,210,2550,200,2558,240,2566,270,2574,280,2582,290] },
    { id: "b3", seed: 5, dx: 9, noise: 14, wick: 28, tick: 5, sw: 2.4, up: "#8fefb9", dn: "#ff6868",
      path: [12,1090,22,1100,32,1070,44,1075,50,1035,58,1000,68,985,76,930,88,892,100,880,110,880,117,970,128,965,140,985,150,990,160,1005,172,1010,185,1005,195,1015,201,1020,209,990,218,960,228,945,240,955,250,945,257,960,265,985,275,960,285,1000,295,1020,305,1040,318,1045,330,1060,338,1075,346,1030,355,990,365,960,378,905,386,880,394,860,402,830,410,820,418,900,428,920,440,905,450,945,460,980,470,940,480,960,490,990,500,970,512,945,523,925,531,1015,540,1060,548,1090,556,1120,565,1160,575,1130,585,1100,595,1070,605,1060,616,1075,628,1060,638,1090,646,1080,652,1070,660,990,670,960,680,950,690,935,700,1000,710,1030,720,1050,730,1110,740,1120,750,1140,760,1115,770,1190,780,1135,790,1170,800,1200,808,1230,815,1250,825,1200,835,1190,845,1170,855,1210,862,1205,870,1165,880,1210,890,1170,898,1200,905,1180,912,1120,922,1110,932,1060,940,1060,950,1065,960,1040,970,1000,980,985,990,930,1000,935,1008,950,1016,975,1024,985,1033,1010,1040,1020,1048,1005,1053,1000,1060,945,1070,960,1080,925,1088,940,1098,955,1108,945,1118,940,1126,1000,1134,1013] },
    { id: "b4", seed: 13, dx: 7.5, noise: 12, wick: 22, tick: 5, sw: 2.3, up: "#18e4ee", dn: "#ff8a1e",
      path: [1438,1170,1446,1160,1454,1180,1462,1185,1468,1215,1476,1240,1482,1230,1490,1225,1498,1175,1506,1165,1514,1150,1522,1160,1530,1148,1538,1160,1546,1170,1554,1150,1562,1180,1570,1165,1578,1150,1586,1172,1594,1180,1602,1170,1610,1140,1618,1150,1626,1140,1634,1120,1642,1110,1650,1140,1658,1150,1666,1170,1674,1185,1682,1210,1690,1220,1698,1200,1706,1180,1714,1160,1722,1190,1730,1195,1738,1190,1746,1188,1754,1160,1762,1110,1770,1090,1778,1080,1786,1095,1794,1100,1802,1090,1810,1090,1818,1100,1826,1130,1834,1160,1842,1130,1850,1120,1858,1100,1866,1085,1874,1070,1882,1060,1890,1040,1898,1030,1906,1010,1914,1000,1922,1010,1930,985,1938,975,1946,970,1954,965,1962,985,1970,995,1978,1000,1986,995,1994,985,2002,980,2010,990,2018,1000,2026,985,2034,980,2042,970,2050,950,2058,940,2066,930,2074,910,2082,900,2090,880,2098,860,2106,845,2114,840,2122,835,2130,845,2138,830,2146,830,2154,810,2162,815,2170,830,2178,835,2186,850,2194,855,2202,870,2210,880,2218,875,2226,870,2234,875,2242,880,2250,860,2258,870,2266,885,2274,850,2282,840,2290,860,2298,920,2306,930,2314,955,2322,940,2330,900,2338,880,2346,870,2354,860,2362,850,2370,860,2378,850,2386,865,2394,870,2402,860,2410,855,2418,860,2426,850,2434,835,2442,820,2450,815,2458,850,2466,855,2474,840,2482,850,2490,880,2498,870,2506,860,2514,880,2522,905,2530,905,2538,895,2546,910,2554,900,2562,920,2570,930,2578,935,2586,945,2594,950,2600,942] }
  ];
  charts.forEach(function (c) {
    var g = document.getElementById(c.id);
    if (!g) return;
    var r = rng(c.seed), p = pairs(c.path), x0 = p[0][0], x1 = p[p.length - 1][0];
    var up = "", dn = "", prev = interp(p, x0) + 5;
    for (var x = x0; x <= x1 + 0.01; x += c.dx) {
      var last = x + c.dx > x1 + 0.01;
      var cl = last ? p[p.length - 1][1] : interp(p, x) + (r() - 0.5) * c.noise;
      var o = prev;
      var hi = Math.min(o, cl) - 2 - Math.pow(r(), 1.5) * c.wick;
      var lo = Math.max(o, cl) + 2 + Math.pow(r(), 1.5) * c.wick;
      var xx = Math.round(x);
      var s = "M" + xx + " " + hi.toFixed(1) + "V" + lo.toFixed(1) +
        "M" + (xx - c.tick) + " " + o.toFixed(1) + "H" + xx +
        "M" + xx + " " + cl.toFixed(1) + "H" + (xx + c.tick);
      if (cl <= o) up += s; else dn += s;
      prev = cl;
    }
    [[up, c.up], [dn, c.dn]].forEach(function (a) {
      var e = document.createElementNS(NS, "path");
      e.setAttribute("d", a[0]);
      e.setAttribute("stroke", a[1]);
      e.setAttribute("stroke-width", c.sw);
      e.setAttribute("fill", "none");
      g.appendChild(e);
    });
  });
})();
```
